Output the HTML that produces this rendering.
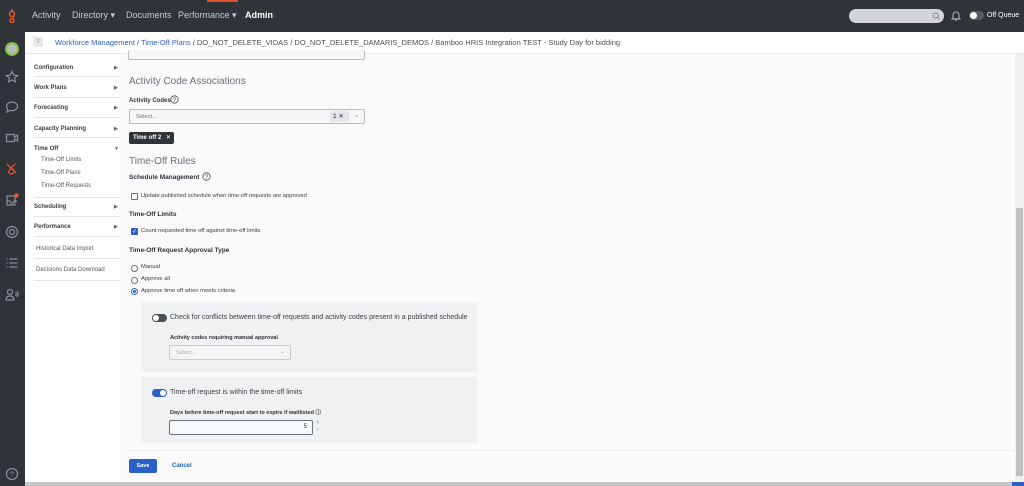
<!DOCTYPE html>
<html><head><style>
*{margin:0;padding:0;box-sizing:border-box}
body{width:1024px;height:486px;overflow:hidden;font-family:"Liberation Sans",sans-serif;background:#fafafa;position:relative;color:#2e3238}
.a{position:absolute}
.top{left:0;top:0;width:1024px;height:32px;background:#2f3439}
.top .n{position:absolute;top:10px;font-size:9px;color:#c8ccd0}
.rail{left:0;top:32px;width:25px;height:454px;background:#2f3439}
.bc{left:25px;top:32px;width:999px;height:22px;background:#fff;border-bottom:1px solid #e4e6e8;font-size:7.5px;color:#4a4f55}
.side{left:25px;top:54px;width:95px;height:430px;background:#fff}
.si{position:absolute;left:9px;font-size:6px;font-weight:bold;color:#3b4045}
.si .ar{position:absolute;left:80px;font-size:5px;color:#666}
.sl{position:absolute;left:9px;width:86px;border-top:1px solid #e3e5e8}
.sub{position:absolute;left:16px;font-size:6px;color:#55595e}
.h{font-size:10px;color:#6a7078}
.lb{font-size:6.5px;font-weight:bold;color:#2e3238}
.t{font-size:5.8px;color:#3b4045}
.box{border:1px solid #b6bcc3;background:#f5f6f7;border-radius:2px}
.cb{width:7px;height:7px;border:1px solid #6b7178;border-radius:1px;background:#fff}
.rd{width:7px;height:7px;border:1px solid #6b7178;border-radius:50%;background:#fff}
.ic{stroke:#8a9097;fill:none;stroke-width:1.2}
</style></head><body>
<div class="a top">
  <svg class="a" style="left:6px;top:8px" width="12" height="16" viewBox="0 0 12 16"><g stroke="#e0502e" stroke-width="1.6" fill="none"><circle cx="6" cy="6" r="2.5"/><circle cx="6" cy="12.5" r="2"/><path d="M6 3V1M8 8L7 10.5"/></g></svg>
  <span class="n" style="left:32px">Activity</span>
  <span class="n" style="left:72px">Directory ▾</span>
  <span class="n" style="left:126px">Documents</span>
  <span class="n" style="left:178px">Performance ▾</span>
  <span class="n" style="left:245px;color:#fff;font-weight:bold">Admin</span>
  <div class="a" style="left:207px;top:0;width:31px;height:2px;background:#e0502e"></div>
  <div class="a" style="left:849px;top:9px;width:95px;height:14px;border-radius:7px;background:#d3d5d8"></div>
  <svg class="a" style="left:932px;top:12px" width="8" height="8"><circle cx="3.5" cy="3.5" r="2.5" stroke="#888" fill="none"/><path d="M5.5 5.5L7.5 7.5" stroke="#888"/></svg>
  <svg class="a" style="left:951px;top:10px" width="10" height="11"><path d="M2 8V5a3 3 0 0 1 6 0v3l1 1H1z M4 10h2" stroke="#bbb" fill="none"/></svg>
  <div class="a" style="left:969px;top:11px;width:15px;height:9px;border-radius:5px;background:#555b61"></div>
  <div class="a" style="left:970px;top:12px;width:7px;height:7px;border-radius:50%;background:#fff"></div>
  <span class="n" style="left:987px;top:12px;font-size:7px;color:#fff">Off Queue</span>
</div>
<div class="a rail">
  <div class="a" style="left:5px;top:10px;width:14px;height:14px;border-radius:50%;background:#bbb;border:2px solid #7dc242"></div>
  <svg class="a" style="left:5px;top:38px" width="14" height="14"><path class="ic" d="M7 1.5l1.7 3.6 3.8.4-2.9 2.6.9 3.8L7 10 3.5 11.9l.9-3.8L1.5 5.5l3.8-.4z"/></svg>
  <svg class="a" style="left:5px;top:68px" width="14" height="14"><path class="ic" d="M7 2c3 0 5.5 1.8 5.5 4.3S10 10.6 7 10.6c-.7 0-1.3 0-2-.2L2 12l.8-2.6C2 8.6 1.5 7.5 1.5 6.3 1.5 3.8 4 2 7 2z"/></svg>
  <svg class="a" style="left:5px;top:99px" width="14" height="14"><path class="ic" d="M1.5 3.5h8v7h-8zM9.5 6l3-2v6l-3-2"/></svg>
  <svg class="a" style="left:5px;top:130px" width="14" height="14"><path d="M2 2l9 9M10 2C6 6 3 9 4 11s4 1 5-1-2-4-4-3" stroke="#e0502e" stroke-width="1.3" fill="none"/></svg>
  <svg class="a" style="left:5px;top:161px" width="14" height="14"><path class="ic" d="M2 3h8v9H2zM2 8h3l1 2h2l1-2h3"/><circle cx="11.5" cy="2.5" r="2.2" fill="#e8572f"/></svg>
  <svg class="a" style="left:5px;top:193px" width="14" height="14"><circle class="ic" cx="7" cy="7" r="5.5"/><circle class="ic" cx="7" cy="7" r="2.5"/></svg>
  <svg class="a" style="left:5px;top:224px" width="14" height="14"><path class="ic" d="M1.5 3h1M1.5 7h1M1.5 11h1M4.5 3h8M4.5 7h8M4.5 11h8"/></svg>
  <svg class="a" style="left:5px;top:256px" width="14" height="14"><circle class="ic" cx="5" cy="4" r="2.5"/><path class="ic" d="M1 12c0-3 2-4 4-4s4 1 4 4zM10.5 4c1 1 1 3 0 4M12 3c1.5 1.5 1.5 4.5 0 6"/></svg>
  <svg class="a" style="left:5px;top:435px" width="14" height="14"><circle class="ic" cx="7" cy="7" r="5.5"/><text x="7" y="9.5" font-size="7" fill="#8a9097" text-anchor="middle" font-family="Liberation Sans">?</text></svg>
</div>
<div class="a bc">
  <div class="a" style="left:8px;top:5px;width:10px;height:10px;background:#e6e8ea;border-radius:1px;font-size:6px;color:#999;text-align:center;line-height:10px">≡</div>
  <span class="a" style="left:30px;top:6px;white-space:nowrap"><span style="color:#2a60c8">Workforce Management</span> / <span style="color:#2a60c8">Time-Off Plans</span> / DO_NOT_DELETE_VIDAS / DO_NOT_DELETE_DAMARIS_DEMOS / Bamboo HRIS Integration TEST - Study Day for bidding</span>
</div>
<div class="a side">
  <div class="si" style="top:11px">Configuration<span class="ar">▶</span></div><div class="sl" style="top:22px"></div>
  <div class="si" style="top:31px">Work Plans<span class="ar">▶</span></div><div class="sl" style="top:43px"></div>
  <div class="si" style="top:51px">Forecasting<span class="ar">▶</span></div><div class="sl" style="top:63px"></div>
  <div class="si" style="top:72px">Capacity Planning<span class="ar">▶</span></div><div class="sl" style="top:83px"></div>
  <div class="si" style="top:92px">Time Off<span class="ar">▼</span></div>
  <div class="sub" style="top:103px">Time-Off Limits</div>
  <div class="sub" style="top:116px">Time-Off Plans</div>
  <div class="sub" style="top:129px">Time-Off Requests</div><div class="sl" style="top:143px"></div>
  <div class="si" style="top:150px">Scheduling<span class="ar">▶</span></div><div class="sl" style="top:162px"></div>
  <div class="si" style="top:170px">Performance<span class="ar">▶</span></div><div class="sl" style="top:182px"></div>
  <div class="sub" style="top:192px;left:11px">Historical Data Import</div><div class="sl" style="top:204px"></div>
  <div class="sub" style="top:213px;left:11px">Decisions Data Download</div><div class="sl" style="top:226px"></div>
</div>
<div class="a box" style="left:128px;top:50px;width:237px;height:10px;border-top:none"></div>
<div class="a h" style="left:129px;top:76px">Activity Code Associations</div>
<div class="a lb" style="left:129px;top:98px;font-size:6px">Activity Codes</div>
<svg class="a" style="left:170px;top:95px" width="9" height="9"><circle cx="4.5" cy="4.5" r="3.7" stroke="#444" fill="none" stroke-width=".8"/><text x="4.5" y="6.8" font-size="6" text-anchor="middle" fill="#444" font-family="Liberation Sans">?</text></svg>
<div class="a box" style="left:129px;top:109px;width:236px;height:15px"></div>
<span class="a t" style="left:136px;top:114px;color:#6a7078">Select...</span>
<div class="a" style="left:330px;top:111px;width:19px;height:11px;background:#e3e5e8;border-radius:2px;font-size:6.5px;line-height:11px;padding-left:3px">1 ✕</div>
<span class="a t" style="left:354px;top:113px;color:#888">⌄</span>
<div class="a" style="left:129px;top:132px;width:45px;height:12px;background:#2f3439;border-radius:2px;color:#fff;font-size:6px;font-weight:bold;line-height:12px;padding-left:4px">Time off 2 <span style="font-weight:normal;margin-left:3px">✕</span></div>
<div class="a h" style="left:129px;top:156px">Time-Off Rules</div>
<div class="a lb" style="left:129px;top:174px">Schedule Management</div>
<svg class="a" style="left:202px;top:172px" width="9" height="9"><circle cx="4.5" cy="4.5" r="3.7" stroke="#444" fill="none" stroke-width=".8"/><text x="4.5" y="6.8" font-size="6" text-anchor="middle" fill="#444" font-family="Liberation Sans">?</text></svg>
<div class="a cb" style="left:131px;top:193px"></div>
<span class="a t" style="left:141px;top:193px">Update published schedule when time-off requests are approved</span>
<div class="a lb" style="left:129px;top:211px">Time-Off Limits</div>
<div class="a cb" style="left:131px;top:228px;background:#2a60c8;border-color:#2a60c8;color:#fff;font-size:6px;line-height:6px;text-align:center">✓</div>
<span class="a t" style="left:141px;top:228px">Count requested time off against time-off limits</span>
<div class="a lb" style="left:129px;top:247px">Time-Off Request Approval Type</div>
<div class="a rd" style="left:131px;top:265px"></div><span class="a t" style="left:141px;top:264px">Manual</span>
<div class="a rd" style="left:131px;top:277px"></div><span class="a t" style="left:141px;top:276px">Approve all</span>
<div class="a rd" style="left:131px;top:288px;border-color:#2a60c8"><div style="margin:1px;width:3px;height:3px;border-radius:50%;background:#2a60c8"></div></div><span class="a t" style="left:141px;top:288px">Approve time off when meets criteria</span>
<div class="a" style="left:141px;top:302px;width:337px;height:70px;background:#f0f1f3"></div>
<div class="a" style="left:152px;top:314px;width:15px;height:8px;border-radius:4px;background:#4a4f55"></div>
<div class="a" style="left:153px;top:315px;width:6px;height:6px;border-radius:50%;background:#fff"></div>
<span class="a" style="left:170px;top:314px;font-size:7px;color:#3b4045">Check for conflicts between time-off requests and activity codes present in a published schedule</span>
<div class="a lb" style="left:170px;top:335px;font-size:5.5px">Activity codes requiring manual approval</div>
<div class="a" style="left:169px;top:345px;width:122px;height:15px;border:1px solid #c8ccd1;border-radius:2px;background:#f3f4f5"></div>
<span class="a t" style="left:176px;top:350px;color:#aaa;font-size:5.5px">Select...</span>
<span class="a t" style="left:280px;top:349px;color:#aaa">⌄</span>
<div class="a" style="left:141px;top:377px;width:337px;height:66px;background:#f0f1f3"></div>
<div class="a" style="left:152px;top:389px;width:15px;height:8px;border-radius:4px;background:#2a60c8"></div>
<div class="a" style="left:160px;top:390px;width:6px;height:6px;border-radius:50%;background:#fff"></div>
<span class="a" style="left:170px;top:389px;font-size:7px;color:#3b4045">Time-off request is within the time-off limits</span>
<div class="a lb" style="left:170px;top:408px;font-size:5.5px">Days before time-off request start to expire if waitlisted ⓘ</div>
<div class="a" style="left:169px;top:420px;width:144px;height:15px;border:1px solid #6b7178;border-radius:2px;background:#f7f8f9;font-size:6px;text-align:right;padding-right:5px;line-height:13px">5</div>
<span class="a" style="left:316px;top:420px;font-size:5px;color:#888;line-height:7px">˄<br>˅</span>
<div class="a" style="left:128px;top:450px;width:886px;border-top:1px solid #ebedef"></div>
<div class="a" style="left:129px;top:459px;width:28px;height:14px;background:#2a60c8;border-radius:2px;color:#fff;font-size:5.5px;font-weight:bold;text-align:center;line-height:14px">Save</div>
<span class="a" style="left:172px;top:463px;font-size:6px;font-weight:bold;color:#2a60c8">Cancel</span>
<div class="a" style="left:1015px;top:54px;width:9px;height:428px;background:#f0f0f0"></div>
<div class="a" style="left:1016px;top:208px;width:7px;height:268px;background:#c1c1c1"></div>
<div class="a" style="left:25px;top:482px;width:999px;height:4px;background:#c6c6c6"></div>
<div class="a" style="left:1012px;top:482px;width:12px;height:4px;background:#2a60c8"></div>
</body></html>
